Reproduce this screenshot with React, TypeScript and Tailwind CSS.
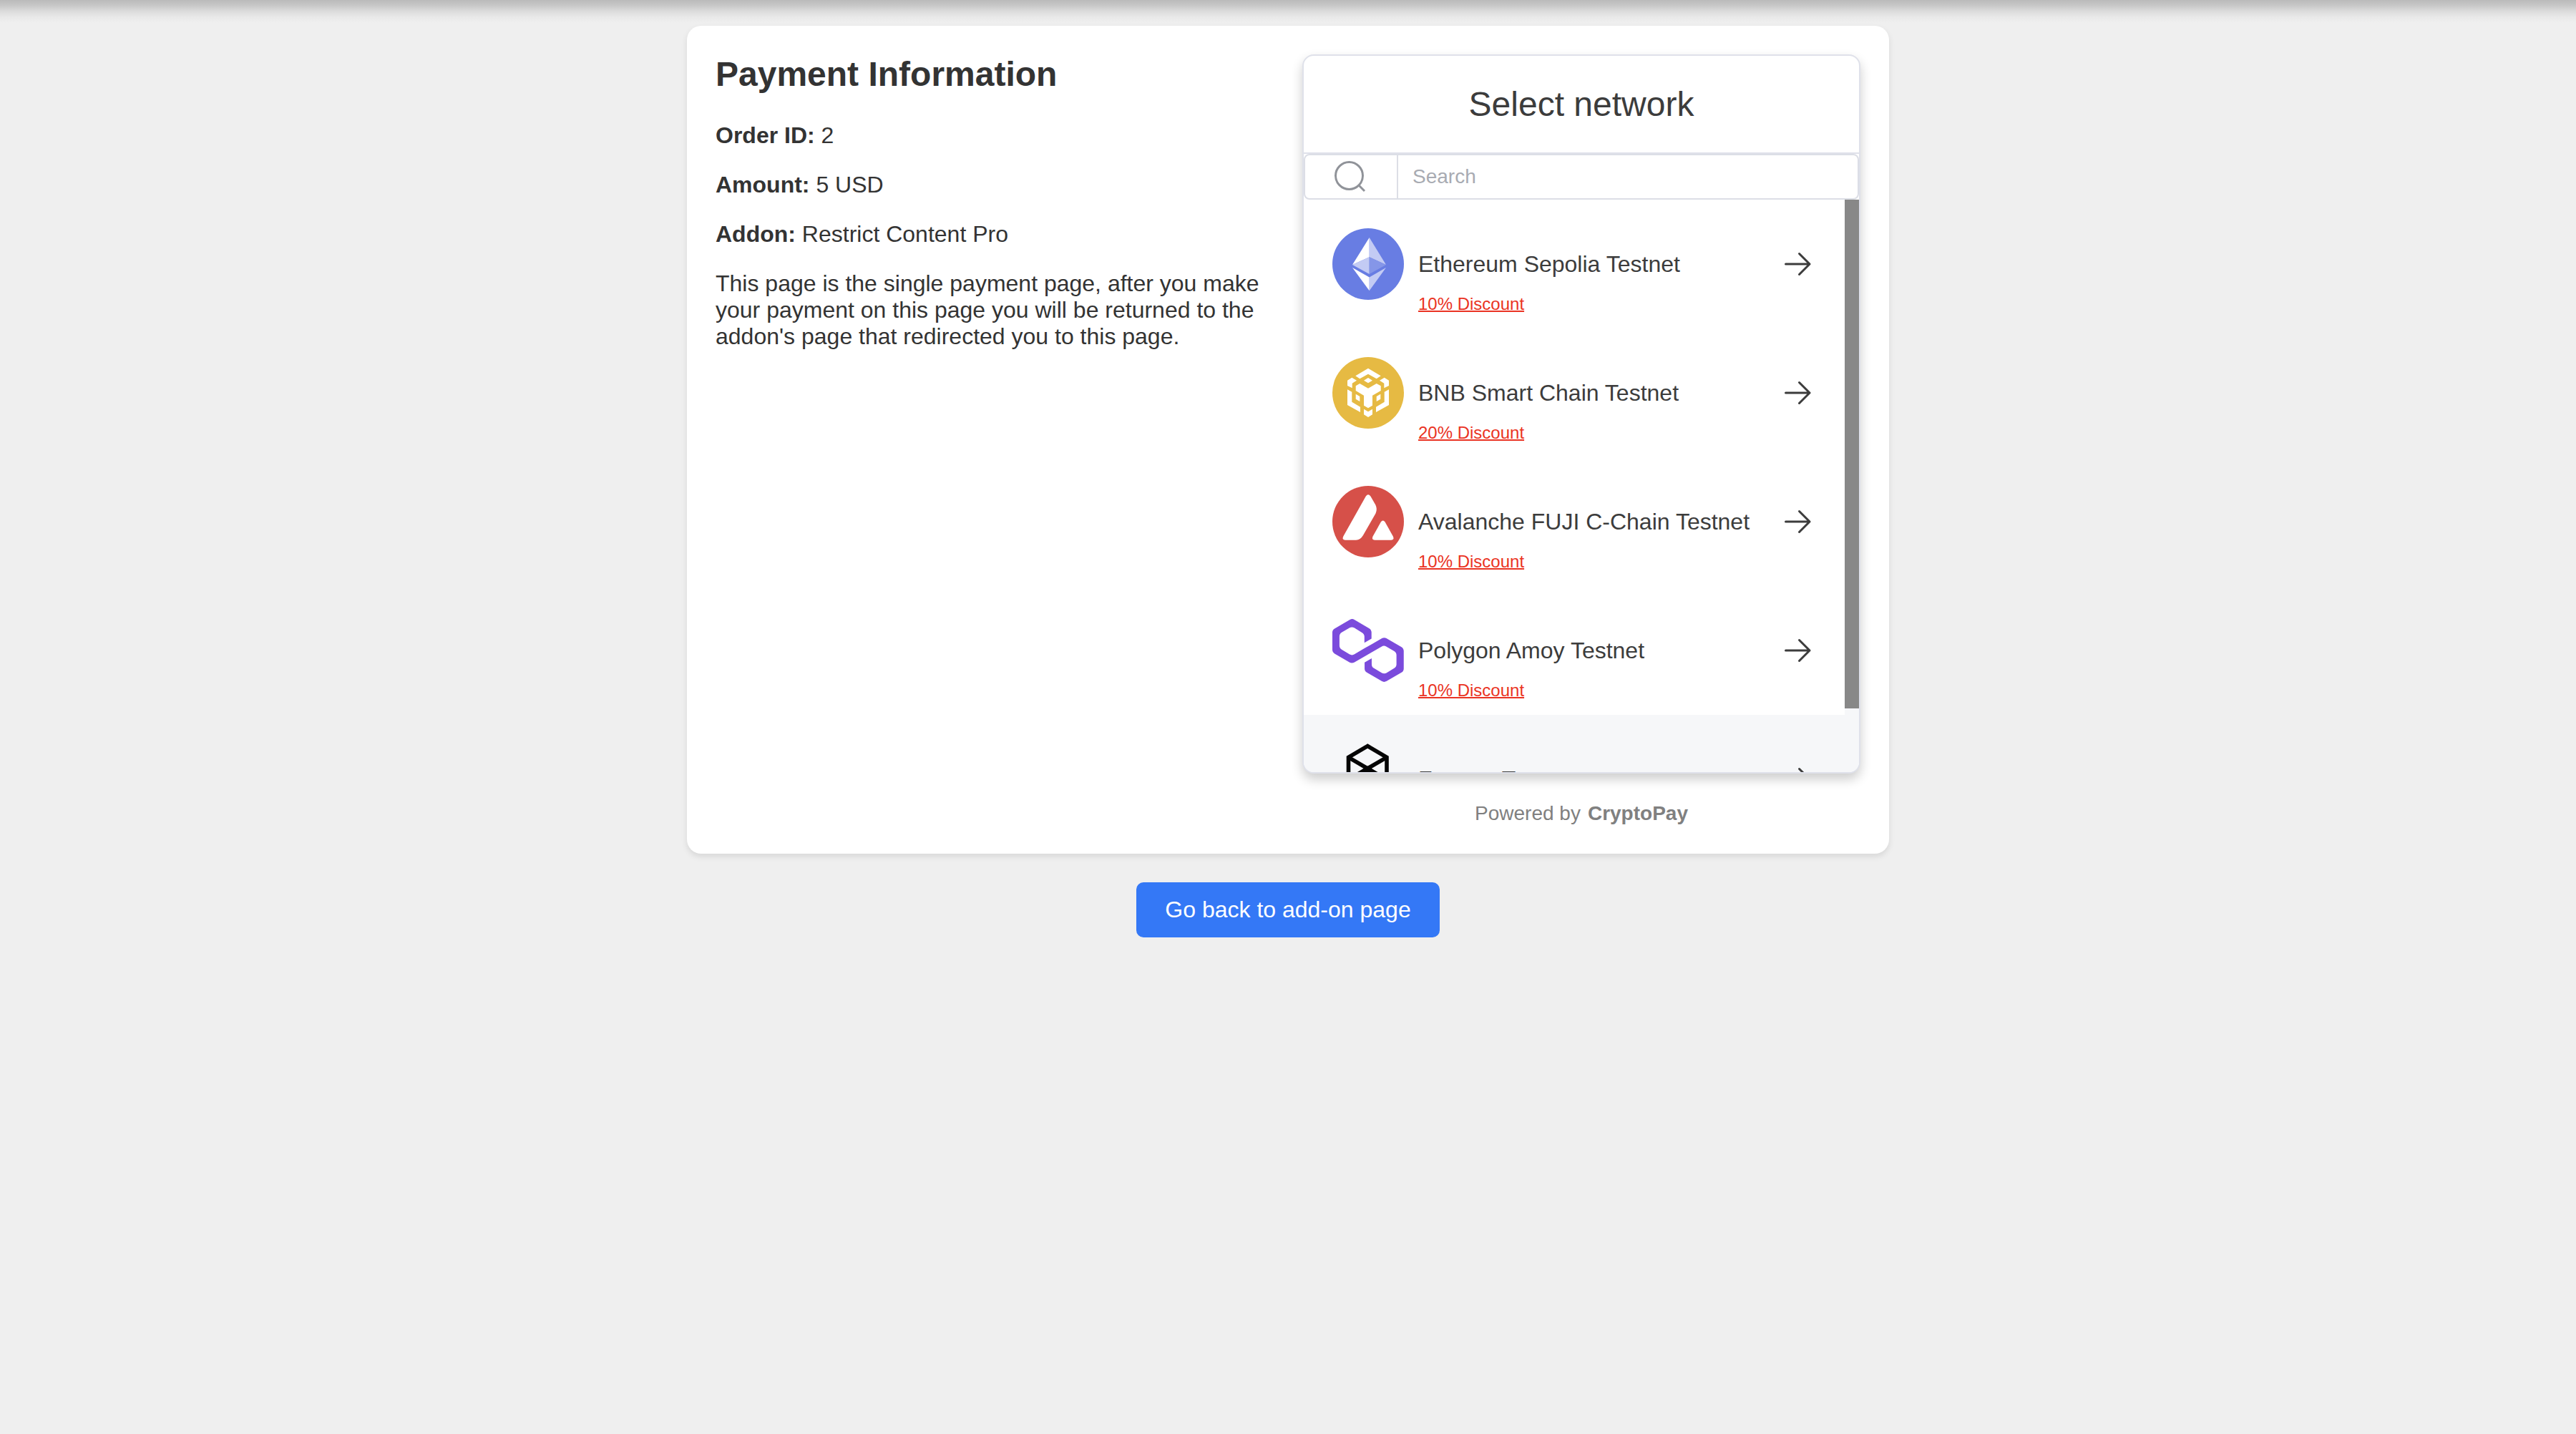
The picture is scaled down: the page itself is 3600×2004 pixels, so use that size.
import type { ReactNode } from "react";

function EthereumLogo() {
  return (
    <svg viewBox="0 0 100 100" className="size-full" aria-hidden="true">
      <circle cx="50" cy="50" r="50" fill="#687de3" />
      <path fill="#fff" d="M51.7 13 28 51l23.7-10.7z" />
      <path fill="#c3cbf4" d="M51.7 13 75 51 51.7 40.3z" />
      <path fill="#c3cbf4" d="M51.7 40.3 28 51l23.7 13z" />
      <path fill="#8596e8" d="M51.7 40.3 75 51 51.7 64z" />
      <path fill="#fff" d="M28 55l23.7 13.5v18.8z" />
      <path fill="#c3cbf4" d="M75 55 51.7 68.500v18.800z" />
    </svg>
  );
}

function BnbLogo() {
  return (
    <svg viewBox="0 0 100 100" className="size-full" aria-hidden="true">
      <circle cx="50" cy="50" r="50" fill="#e6ba43" />
      <g fill="#fff">
        <path d="M50 15.7 67.7 26.3 61.7 30.3 50 23.7 38.3 30.3 32.3 26.3z" />
        <path d="M50 29 56 32.7 50 36.3 44 32.7z" />
        <path d="M21 32.7 27.3 28.7 34 32.7 27.7 36.7V43.3L21 40z" />
        <path d="M79 32.7 72.7 28.7 66 32.7 72.3 36.7V43.3L79 40z" />
        <path d="M32.7 40.3 38.3 37 50 43.7 61.7 37 67.7 40.3V47L56 53.7V67.7L50 71.3 44 67.7V53.7L32.7 47z" />
        <path d="M21 45.3 27.3 48.7V62.7L39 69.7V77L21 67z" />
        <path d="M79 45.3 72.7 48.7V62.7L61 69.7V77L79 67z" />
        <path d="M32.7 51.7 38.3 55V62L32.7 58.7z" />
        <path d="M67.3 51.7 61.7 55V62L67.3 58.7z" />
        <path d="M44 72.7 50 76.3 56 72.7V80.3L50 84 44 80.3z" />
      </g>
    </svg>
  );
}

function AvalancheLogo() {
  return (
    <svg viewBox="0 0 100 100" className="size-full" aria-hidden="true">
      <circle cx="50" cy="50" r="50" fill="#d65049" />
      <path
        fill="#fff"
        d="M46.8 14.5Q50 10 53.4 14.5L60.3 26.6Q63.3 32.5 60.5 38.5L43 69Q39.2 75.7 33 75.7H18Q13 75.7 15.3 70.6z"
      />
      <path
        fill="#fff"
        d="M67.8 50.6Q70.7 46.6 73.6 50.6L84.8 70.6Q87 75.7 82.2 75.7H59.2Q54.4 75.7 56.6 70.6z"
      />
    </svg>
  );
}

function PolygonLogo() {
  return (
    <svg viewBox="0 0 38.4 33.5" className="size-full" aria-hidden="true">
      <path
        fill="#7b4bdc"
        d="M29,10.2c-0.7-0.4-1.6-0.4-2.4,0L21,13.5l-3.8,2.1l-5.5,3.3c-0.7,0.4-1.6,0.4-2.4,0L5,16.3c-0.7-0.4-1.2-1.2-1.2-2.1v-5c0-0.8,0.4-1.6,1.2-2.1l4.3-2.5c0.7-0.4,1.6-0.4,2.4,0L16,7.2c0.7,0.4,1.2,1.2,1.2,2.1v3.3l3.8-2.2V7c0-0.8-0.4-1.6-1.2-2.1l-8-4.7c-0.7-0.4-1.6-0.4-2.4,0L1.2,5C0.4,5.4,0,6.2,0,7v9.4c0,0.8,0.4,1.6,1.2,2.1l8.1,4.7c0.7,0.4,1.6,0.4,2.4,0l5.5-3.2l3.8-2.2l5.5-3.2c0.7-0.4,1.6-0.4,2.4,0l4.3,2.5c0.7,0.4,1.2,1.2,1.2,2.1v5c0,0.8-0.4,1.6-1.2,2.1L29,28.8c-0.7,0.4-1.6,0.4-2.4,0l-4.3-2.5c-0.7-0.4-1.2-1.2-1.2-2.1V21l-3.8,2.2v3.3c0,0.8,0.4,1.6,1.2,2.1l8.1,4.7c0.7,0.4,1.6,0.4,2.4,0l8.1-4.7c0.7-0.4,1.2-1.2,1.2-2.1V17c0-0.8-0.4-1.6-1.2-2.1L29,10.2z"
      />
    </svg>
  );
}

function FantomLogo() {
  return (
    <svg viewBox="0 0 100 100" className="size-full" aria-hidden="true">
      <g fill="none" stroke="#050505" strokeWidth="5.6">
        <path d="M49.2 3.6 22.5 19.3V80.5L49.2 96 76 80.5V19.3z" />
        <path d="M22.5 19.3 49.2 35 76 19.3" />
        <path d="M22.5 50.5 49.2 35 76 50.5 49.2 66z" />
        <path d="M49.2 35V66" />
      </g>
      <path fill="#050505" d="M49.2 31.5 55.5 35.5 63.5 40.5H35L43 35.5z" />
    </svg>
  );
}

function SearchIcon() {
  return (
    <svg viewBox="0 0 48 48" className="size-12" fill="none" stroke="#909399" strokeWidth="3" aria-hidden="true">
      <circle cx="21.5" cy="22.5" r="19" />
      <path d="M35 36 43 44" />
    </svg>
  );
}

function ArrowIcon() {
  return (
    <svg
      viewBox="0 0 40 40"
      className="size-10"
      fill="none"
      stroke="#3c3c3c"
      strokeWidth="3"
      strokeLinecap="round"
      strokeLinejoin="round"
      aria-hidden="true"
    >
      <path d="M3.5 20H37M22.5 5.5 37 20 22.5 34.5" />
    </svg>
  );
}

type Network = { name: string; discount?: string; logo: ReactNode; active?: boolean };

const networks: Network[] = [
  { name: "Ethereum Sepolia Testnet", discount: "10% Discount", logo: <EthereumLogo /> },
  { name: "BNB Smart Chain Testnet", discount: "20% Discount", logo: <BnbLogo /> },
  { name: "Avalanche FUJI C-Chain Testnet", discount: "10% Discount", logo: <AvalancheLogo /> },
  { name: "Polygon Amoy Testnet", discount: "10% Discount", logo: <PolygonLogo /> },
  { name: "Fantom Testnet", logo: <FantomLogo />, active: true },
];

function NetworkRow({ network }: { network: Network }) {
  return (
    <li>
      <button
        type="button"
        className={
          network.active
            ? "flex h-[180px] w-full items-start bg-[#f6f7f9] px-10 pt-10 text-left"
            : "flex h-[180px] w-full items-start bg-white px-10 pt-10 text-left"
        }
      >
        <span className="size-[100px] shrink-0">{network.logo}</span>
        <span className="ml-5 flex flex-1 flex-col">
          <span className="flex h-[100px] items-center text-[32px] leading-[37px]">{network.name}</span>
          {network.discount && (
            <span className="-mt-2 text-[24px] leading-7 text-[#ea3323] underline decoration-2">
              {network.discount}
            </span>
          )}
        </span>
        <span className="mr-1.5 flex h-[100px] items-center">
          <ArrowIcon />
        </span>
      </button>
    </li>
  );
}

function NetworkPicker() {
  return (
    <section className="overflow-hidden rounded-2xl border-2 border-[#dfe1ea] bg-white text-[#3c3c3c] shadow-[0_8px_16px_rgba(0,0,0,0.2)]">
      <h2 className="border-b-2 border-[#dfe1ea] py-10 text-center text-[48px] leading-[55px]">Select network</h2>
      <div className="flex h-16 rounded-lg border-2 border-[#dcdee6]">
        <label htmlFor="network-search" aria-label="Search" className="flex w-[130px] items-center justify-center border-r-2 border-[#dcdee6]">
          <SearchIcon />
        </label>
        <input
          id="network-search"
          type="text"
          placeholder="Search"
          className="min-w-0 flex-1 bg-transparent px-5 text-[28px] leading-8 outline-none placeholder:text-[#a8abb2]"
        />
      </div>
      <div className="flex h-[800px]">
        <ul className="flex-1 overflow-y-auto [scrollbar-width:none]">
          {networks.map((network) => (
            <NetworkRow key={network.name} network={network} />
          ))}
        </ul>
        <div className="w-5 bg-[#f6f7f9]">
          <div className="h-[711px] bg-[#888888]" />
        </div>
      </div>
    </section>
  );
}

export default function App() {
  return (
    <div className="relative min-h-screen bg-[#efefef] px-10 pt-9 font-['Liberation_Sans',Arial,sans-serif] text-[32px] leading-[37px] text-[#333333]">
      <div className="absolute inset-x-0 top-0 h-8 bg-[linear-gradient(to_bottom,#bababa_0%,#c8c8c8_25%,#dcdcdc_50%,#e9e9e9_75%,#efefef_100%)]" />
      <main className="relative mx-auto flex max-w-[1680px] flex-col items-center gap-10">
        <div className="grid w-full grid-cols-2 gap-10 rounded-[20px] bg-white p-10 shadow-[0_4px_8px_rgba(0,0,0,0.1)]">
          <section className="flex flex-col">
            <h1 className="mb-10 text-[48px] leading-[55px] font-bold">Payment Information</h1>
            <div className="flex flex-col gap-8">
              <p>
                <strong>Order ID:</strong> 2
              </p>
              <p>
                <strong>Amount:</strong> 5 USD
              </p>
              <p>
                <strong>Addon:</strong> Restrict Content Pro
              </p>
              <p>
                This page is the single payment page, after you make your payment on this page you will be returned to
                the addon's page that redirected you to this page.
              </p>
            </div>
          </section>
          <div>
            <NetworkPicker />
            <p className="mt-10 flex justify-center gap-2.5 text-[28px] leading-8 text-[#808080]">
              Powered by
              <a href="#cryptopay" className="font-bold">
                CryptoPay
              </a>
            </p>
          </div>
        </div>
        <button type="button" className="rounded-[10px] bg-[#3478f6] px-10 py-5 text-white">
          Go back to add-on page
        </button>
      </main>
    </div>
  );
}
